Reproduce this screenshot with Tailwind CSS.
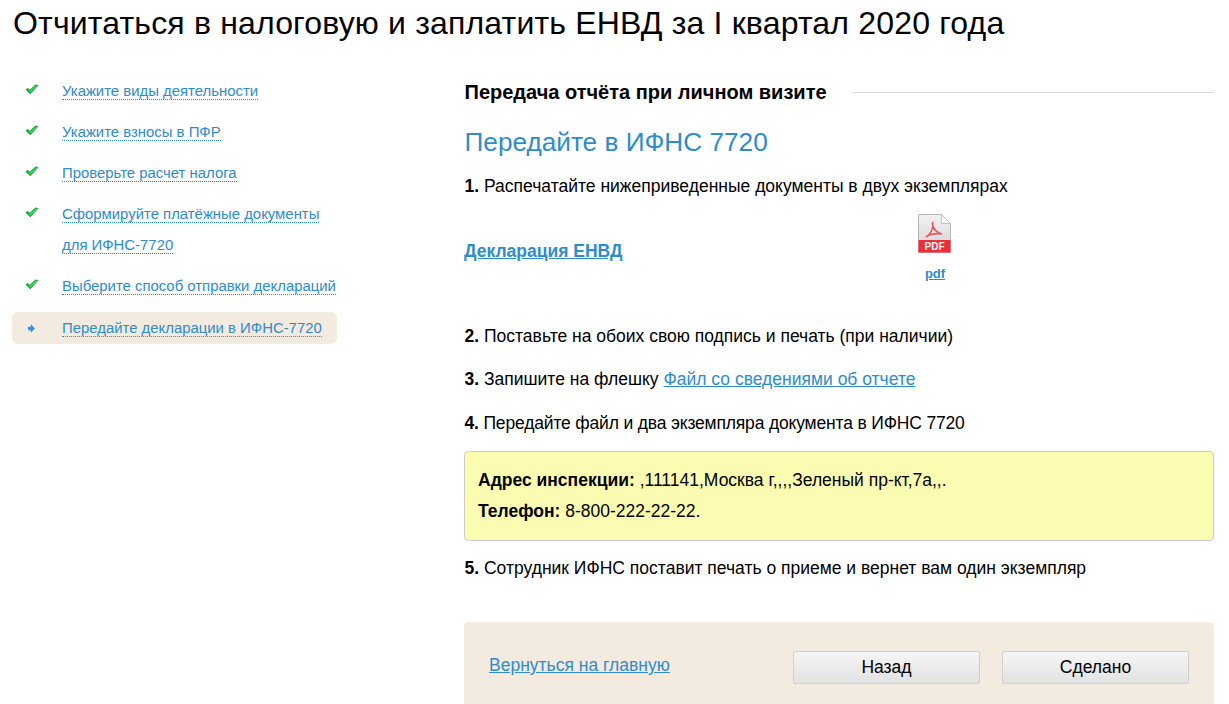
<!DOCTYPE html>
<html lang="ru">
<head>
    <meta charset="UTF-8">
    <title>ЕНВД</title>
    <script src="https://cdn.jsdelivr.net/npm/@tailwindcss/browser@4"></script>
</head>
<body class="bg-white text-black font-['Liberation_Sans',Arial,sans-serif] h-[704px] overflow-hidden">

    <h1 class="text-[32px] leading-[32px] tracking-[0.17px] pl-[13px] pt-[7px] h-[71px]">Отчитаться в налоговую и заплатить ЕНВД за I квартал 2020 года</h1>

    <div class="flex pl-[12px] pr-[15px]">

        <!-- Steps -->
        <ul class="w-[325px] shrink-0 text-[14.9px] text-[#2f8ccb]">
            <li class="flex h-[41px] pt-[10px] leading-[20px]">
                <svg class="w-[14px] h-[11px] ml-[13px] mr-[23px] mt-[3px]" viewBox="0 0 14 11"><path d="M.5 5.500l2.300-1.500 2 1.700L10.500.5l3 .8-8.200 8.900z" fill="#0fa534"/><path d="M2.800 4.800l2 1.700L10.800 1.500l2 .3-7.500 7z" fill="#3fd05c"/></svg>
                <span><a class="border-b border-dotted border-[#2f8ccb]">Укажите виды деятельности</a></span>
            </li>
            <li class="flex h-[41px] pt-[10px] leading-[20px]">
                <svg class="w-[14px] h-[11px] ml-[13px] mr-[23px] mt-[3px]" viewBox="0 0 14 11"><path d="M.5 5.500l2.300-1.500 2 1.700L10.500.5l3 .8-8.200 8.900z" fill="#0fa534"/><path d="M2.800 4.800l2 1.700L10.800 1.500l2 .3-7.500 7z" fill="#3fd05c"/></svg>
                <span><a class="border-b border-dotted border-[#2f8ccb]">Укажите взносы в ПФР</a></span>
            </li>
            <li class="flex h-[41px] pt-[10px] leading-[20px]">
                <svg class="w-[14px] h-[11px] ml-[13px] mr-[23px] mt-[3px]" viewBox="0 0 14 11"><path d="M.5 5.500l2.300-1.500 2 1.700L10.500.5l3 .8-8.200 8.900z" fill="#0fa534"/><path d="M2.800 4.800l2 1.700L10.800 1.500l2 .3-7.500 7z" fill="#3fd05c"/></svg>
                <span><a class="border-b border-dotted border-[#2f8ccb]">Проверьте расчет налога</a></span>
            </li>
            <li class="flex h-[72px] pt-[10px] leading-[31px]">
                <svg class="w-[14px] h-[11px] ml-[13px] mr-[23px] mt-[3px]" viewBox="0 0 14 11"><path d="M.5 5.500l2.300-1.500 2 1.700L10.500.5l3 .8-8.200 8.900z" fill="#0fa534"/><path d="M2.800 4.800l2 1.700L10.800 1.500l2 .3-7.500 7z" fill="#3fd05c"/></svg>
                <span class="-mt-[5px]"><a class="border-b border-dotted border-[#2f8ccb]">Сформируйте платёжные документы</a><br><a class="border-b border-dotted border-[#2f8ccb]">для ИФНС-7720</a></span>
            </li>
            <li class="flex h-[46px] pt-[10px] leading-[20px]">
                <svg class="w-[14px] h-[11px] ml-[13px] mr-[23px] mt-[3px]" viewBox="0 0 14 11"><path d="M.5 5.500l2.300-1.500 2 1.700L10.500.5l3 .8-8.200 8.900z" fill="#0fa534"/><path d="M2.800 4.800l2 1.700L10.800 1.500l2 .3-7.500 7z" fill="#3fd05c"/></svg>
                <span><a class="border-b border-dotted border-[#2f8ccb]">Выберите способ отправки деклараций</a></span>
            </li>
            <li class="flex items-center h-[32px] bg-[#f3ebdf] rounded-[6px]">
                <svg class="w-[7px] h-[9px] ml-[16px] mr-[27px]" viewBox="0 0 7 9"><path d="M0 2.800h2.600L3 .3 7 4.500 3 8.700 2.600 6.200H0z" fill="#3a93d8"/></svg>
                <span><a class="border-b border-dotted border-[#2f8ccb]">Передайте декларации в ИФНС-7720</a></span>
            </li>
        </ul>

        <!-- Main -->
        <main class="ml-[127px] w-[750px] text-[17.5px]">
            <div class="flex items-center h-[42px] pl-[0.5px]">
                <h2 class="font-bold text-[20px] mr-[24px]">Передача отчёта при личном визите</h2>
                <div class="flex-1 border-t border-[#dddddd]"></div>
            </div>
            <h3 class="text-[26.2px] leading-[30px] text-[#2f8ccb] mt-[14px] pl-[0.5px]">Передайте в ИФНС 7720</h3>
            <p class="mt-[18px] leading-[22px] pl-[0.5px]"><b>1.</b> Распечатайте нижеприведенные документы в двух экземплярах</p>

            <div class="flex h-[111px] mt-[17px]">
                <a class="w-[406px] pt-[26px] font-bold text-[#2f8ccb] underline leading-[22px]">Декларация ЕНВД</a>
                <a class="flex flex-col items-center w-[130px] text-[13px] font-bold text-[#2f8ccb] underline">
                    <svg class="w-[33px] h-[40px] -ml-[2px]" viewBox="0 0 33 40">
                        <defs><linearGradient id="pdfg" x1="0" y1="0" x2="0" y2="1"><stop offset="0" stop-color="#f2f2f2"/><stop offset="1" stop-color="#d2d2d2"/></linearGradient></defs>
                        <path d="M.5 .5h23l9 9v29H.5z" fill="url(#pdfg)" stroke="#b8b8b8"/>
                        <path d="M23.500 .5v9h9z" fill="#fafafa" stroke="#c4c4c4"/>
                        <path d="M8 23c4-2 8-8 6.500-15-.5 6 4 11 9.500 12-7-1-12 0-16 3z" fill="none" stroke="#e9545e" stroke-width="1.600"/>
                        <rect x=".5" y="26" width="32" height="12.500" fill="#ec2e38"/>
                        <text x="16.500" y="36" text-anchor="middle" fill="#fff" font-size="10" font-weight="700" font-family="Liberation Sans">PDF</text>
                    </svg>
                    <span class="mt-[10px]">pdf</span>
                </a>
            </div>

            <p class="leading-[22px] pl-[0.5px]"><b>2.</b> Поставьте на обоих свою подпись и печать (при наличии)</p>
            <p class="mt-[21px] leading-[22px] pl-[0.5px]"><b>3.</b> Запишите на флешку <a class="text-[#2f8ccb] underline">Файл со сведениями об отчете</a></p>
            <p class="mt-[22px] leading-[22px] pl-[0.5px] tracking-[-0.17px]"><b>4.</b> Передайте файл и два экземпляра документа в ИФНС 7720</p>

            <div class="mt-[17px] h-[90px] bg-[#fbfcb1] border border-[#cccccc] rounded-[4px] pl-[13px] pt-[13px] leading-[31px]">
                <p><b>Адрес инспекции:</b> ,111141,Москва г,,,,Зеленый пр-кт,7а,,.</p>
                <p><b>Телефон:</b> 8-800-222-22-22.</p>
            </div>

            <p class="mt-[16px] leading-[22px] pl-[0.5px]"><b>5.</b> Сотрудник ИФНС поставит печать о приеме и вернет вам один экземпляр</p>

            <div class="mt-[43px] h-[100px] bg-[#f3ebdf] rounded-t-[4px] flex items-start pl-[25px] pt-[29px]">
                <a class="w-[304px] leading-[28px] text-[#2f8ccb] underline">Вернуться на главную</a>
                <button class="w-[187px] h-[33px] border border-[#cfcfcf] rounded-[2px] bg-gradient-to-b from-[#f6f6f6] to-[#e2e2e2]">Назад</button>
                <button class="w-[187px] h-[33px] ml-[22px] border border-[#cfcfcf] rounded-[2px] bg-gradient-to-b from-[#f6f6f6] to-[#e2e2e2]">Сделано</button>
            </div>
        </main>
    </div>
</body>
</html>
